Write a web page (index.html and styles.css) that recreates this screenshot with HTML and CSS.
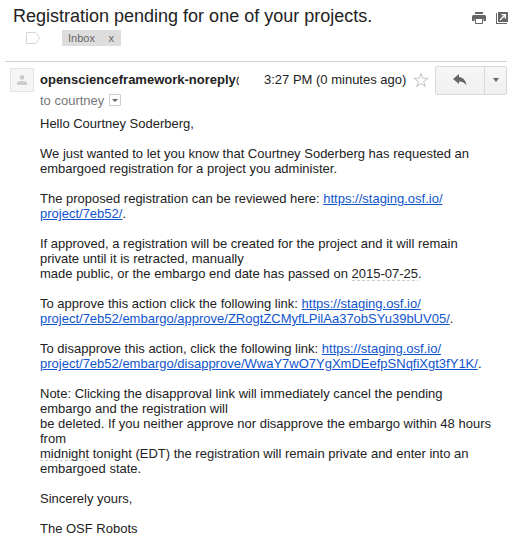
FILE: index.html
```html
<!DOCTYPE html>
<html lang="en">
<head>
<meta charset="utf-8">
<title>Registration pending for one of your projects.</title>
<link rel="stylesheet" href="styles.css">
</head>
<body>
<header class="subject">
  <h1 class="title">Registration pending for one of your projects.</h1>
  <div class="tools">
    <svg width="14" height="12" viewBox="0 0 14 12"><path fill="#666" d="M3 0h8v2H3zM1.500 3h11Q14 3 14 4.500V9h-2.500V7h-9v2H0V4.500Q0 3 1.500 3z"/><path fill="none" stroke="#666" d="M3.500 7v4.500h7V7"/></svg>
    <svg width="12" height="12" viewBox="0 0 12 12"><path fill="#666" d="M2 0h10v10H2zM0 1h1v10h10v1H0z"/><path fill="none" stroke="#fff" stroke-width="1.300" d="M4 8l5-5M5.500 2.700h3.800v3.800"/></svg>
  </div>
</header>
<div class="labels">
  <svg width="14" height="12" viewBox="0 0 14 12"><path fill="none" stroke="#d6d6d6" d="M.5 1Q.5.5 1 .5h8.500q.5 0 .8.400l3.200 5.100-3.200 5.100q-.3.400-.8.400H1q-.5 0-.5-.5z"/></svg>
  <div class="chip"><span>Inbox</span><span>x</span></div>
</div>
<main class="message">
  <div class="avatar"><svg width="10" height="10" viewBox="0 0 10 10"><circle cx="5" cy="2.400" r="2.400" fill="#ccc"/><path fill="#ccc" d="M0 10V8.300Q0 6 5 6t5 2.300V10z"/></svg></div>
  <div class="content">
    <div class="meta">
      <span class="sender">openscienceframework-noreply@</span>
      <span class="time">3:27 PM (0 minutes ago)</span>
      <svg class="star" width="16" height="16" viewBox="0 0 16 16"><path fill="none" stroke="#ccc" stroke-width="1.100" d="M8 1.500l1.700 4.700 5 .1-4 3.100 1.500 4.900L8 11.400l-4.200 2.900 1.500-4.900-4-3.100 5-.1z"/></svg>
      <div class="actions">
        <div class="reply"><svg width="14" height="12" viewBox="0 0 14 12"><path fill="#666" d="M6 0v3q6.500.5 7.500 8.500Q11 7.500 6 7.500V10L0 5z"/></svg></div>
        <div class="more"><i class="caret"></i></div>
      </div>
    </div>
    <div class="recipient">to courtney <span class="details"><i class="caret small"></i></span></div>
    <div class="body">
      <p>Hello Courtney Soderberg,</p>
      <p>We just wanted to let you know that Courtney Soderberg has requested an<br>embargoed registration for a project you administer.</p>
      <p>The proposed registration can be reviewed here: <a href="#">https://staging.osf.io/<br>project/7eb52/</a>.</p>
      <p>If approved, a registration will be created for the project and it will remain<br>private until it is retracted, manually<br>made public, or the embargo end date has passed on <span class="date">2015-07-25</span>.</p>
      <p>To approve this action click the following link: <a href="#">https://staging.osf.io/<br>project/7eb52/embargo/approve/ZRogtZCMyfLPilAa37obSYu39bUV05/</a>.</p>
      <p>To disapprove this action, click the following link: <a href="#">https://staging.osf.io/<br>project/7eb52/embargo/disapprove/WwaY7wO7YgXmDEefpSNqfiXgt3fY1K/</a>.</p>
      <p>Note: Clicking the disapproval link will immediately cancel the pending<br>embargo and the registration will<br>be deleted. If you neither approve nor disapprove the embargo within 48 hours<br>from<br><span class="date">midnight</span> tonight (EDT) the registration will remain private and enter into an<br>embargoed state.</p>
      <p>Sincerely yours,</p>
      <p>The OSF Robots</p>
    </div>
  </div>
</main>
</body>
</html>
```
FILE: styles.css
```css
* { box-sizing: border-box; }
body { margin: 0; width: 516px; height: 557px; overflow: hidden; background: #fff; color: #222; font: 13px/15px "Liberation Sans", Arial, sans-serif; }
svg { display: block; flex: none; }
.subject { display: flex; justify-content: space-between; height: 30px; padding: 5px 8px 0 13px; }
.title { margin: 0; font-size: 18px; line-height: 22px; font-weight: 400; white-space: nowrap; }
.tools { display: flex; gap: 10px; padding-top: 7px; }
.labels { display: flex; gap: 22px; height: 32px; margin: 0 9px 0 5px; padding-left: 21px; border-bottom: 1px solid #d2d2d2; }
.labels svg { margin-top: 2px; }
.chip { display: flex; justify-content: space-between; width: 59px; height: 16px; padding: 0 7px 0 6px; background: #ddd; color: #666; font-size: 11px; line-height: 17px; }
.message { display: flex; padding: 4px 9px 0 10px; }
.avatar { display: flex; align-items: center; justify-content: center; flex: none; width: 24px; height: 24px; margin: 2px 6px 0 0; border: 1px solid #e3e3e3; background: #f5f5f5; }
.content { flex: 1; min-width: 0; }
.meta { display: flex; align-items: center; height: 29px; }
.sender { width: 199px; margin-bottom: 2px; overflow: hidden; font-weight: 700; white-space: nowrap; }
.time { width: 149px; margin: 0 0 2px 25px; white-space: nowrap; }
.star { margin: 0 6px 2px 0; }
.actions { display: flex; flex: none; width: 72px; height: 29px; border: 1px solid #d9d9d9; border-radius: 2px; background: linear-gradient(#f6f6f6, #f0f0f0); }
.reply, .more { display: flex; align-items: center; justify-content: center; }
.reply { width: 49px; padding-right: 0; border-right: 1px solid #d9d9d9; }
.reply svg { margin-bottom: 1px; }
.more { flex: 1; }
.more .caret { margin-bottom: 1px; }
.caret { border: solid transparent; border-width: 4px 3.500px 0; border-top-color: #666; }
.small { border-width: 3px 3px 0; border-top-color: #666; }
.recipient { display: flex; align-items: center; gap: 5px; height: 10px; margin-bottom: 11px; color: #777; }
.details { display: flex; align-items: center; justify-content: center; flex: none; width: 12px; height: 12px; border: 1px solid #ccc; border-radius: 1px; }
.body { white-space: nowrap; }
.body p { margin: 0 0 15px; }
.body a { color: #15c; text-decoration: underline; }
.date { background: repeating-linear-gradient(90deg, #ccc 0 3px, transparent 3px 5px) left bottom / 100% 1px no-repeat; }
```
